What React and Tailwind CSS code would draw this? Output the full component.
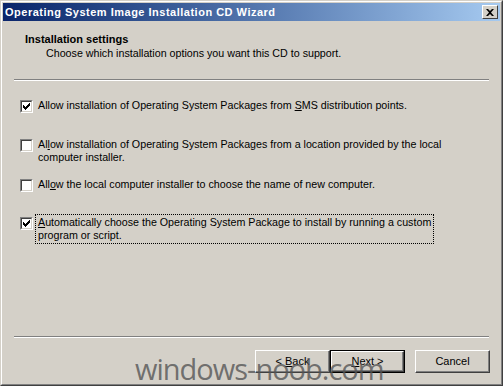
import React from "react"

const font = { fontFamily: "Tahoma, 'Liberation Sans', Arial, sans-serif" }

const Checkbox = ({ checked }) => (
  <div className="w-[13px] h-[13px] shrink-0 border border-t-[#808080] border-l-[#808080] border-r-white border-b-white">
    <div className="w-full h-full bg-white border border-t-[#404040] border-l-[#404040] border-r-[#d4d0c8] border-b-[#d4d0c8] flex items-center justify-center">
      {checked && (
        <svg width="7" height="7" viewBox="0 0 7 7">
          <path d="M0 2h1v1h1v1h1v-1h1v-1h1v-1h1v-1h1v3h-1v1h-1v1h-1v1h-1v1h-1v-1h-1v-1h-1z" fill="#000" />
        </svg>
      )}
    </div>
  </div>
)

const Option = ({ checked, focused, children }) => (
  <div className="flex items-start">
    <div className="pt-[1px]">
      <Checkbox checked={checked} />
    </div>
    <div
      className={`ml-[4px] px-[1px] text-[10.7px] leading-[13px] text-black ${
        focused ? "outline outline-1 outline-dotted outline-black outline-offset-[1px]" : ""
      }`}
    >
      {children}
    </div>
  </div>
)

const Button = ({ children, isDefault }) => (
  <div className={`w-[75px] h-[23px] ${isDefault ? "border border-black" : ""}`}>
    <div className="w-full h-full bg-[#d4d0c8] border border-t-white border-l-white border-r-[#404040] border-b-[#404040] shadow-[inset_-1px_-1px_0_#808080] flex items-center justify-center text-[11px] text-black">
      {children}
    </div>
  </div>
)

export default function App() {
  return (
    <div
      className="relative w-[503px] h-[386px] overflow-hidden bg-[#d4d0c8] border border-t-[#d4d0c8] border-l-[#d4d0c8] border-r-[#404040] border-b-[#404040]"
      style={font}
    >
      <div className="h-full flex flex-col border border-t-white border-l-white border-r-[#808080] border-b-[#808080] p-[1px]">
        {/* title bar */}
        <div className="h-[18px] flex items-center justify-between pl-[2px] pr-[2px] bg-gradient-to-r from-[#0a246a] to-[#a6caf0]">
          <span className="text-white font-bold text-[11px] tracking-[0.5px]">
            Operating System Image Installation CD Wizard
          </span>
          <div className="w-[16px] h-[14px] bg-[#d4d0c8] border border-t-white border-l-white border-r-[#404040] border-b-[#404040] flex items-center justify-center">
            <svg width="8" height="7" viewBox="0 0 8 7">
              <path d="M0 0h2l2 2 2-2h2l-3 3.5 3 3.5h-2l-2-2-2 2h-2l3-3.5z" fill="#000" />
            </svg>
          </div>
        </div>

        {/* header */}
        <div className="pl-[22px] pt-[12px]">
          <div className="text-[11px] leading-[13px] font-bold text-black">Installation settings</div>
          <div className="pl-[21px] pt-[1px] text-[10.7px] leading-[13px] text-black">
            Choose which installation options you want this CD to support.
          </div>
        </div>
        <div className="mx-[11px] mt-[19px] h-[2px] border-t border-t-[#808080] border-b border-b-white" />

        {/* options */}
        <div className="pl-[17px] pt-[18px] flex flex-col">
          <Option checked>
            Allow installation of Operating System Packages from <u>S</u>MS distribution points.
          </Option>
          <div className="h-[25px]" />
          <Option>
            Al<u>l</u>ow installation of Operating System Packages from a location provided by the local
            <br />
            computer installer.
          </Option>
          <div className="h-[14px]" />
          <Option>
            All<u>o</u>w the local computer installer to choose the name of new computer.
          </Option>
          <div className="h-[24px]" />
          <Option checked focused>
            <u>A</u>utomatically choose the Operating System Package to install by running a custom
            <br />
            program or script.
          </Option>
        </div>

        <div className="flex-1" />
        <div className="mx-[11px] h-[2px] border-t border-t-[#808080] border-b border-b-white" />

        {/* buttons */}
        <div className="flex justify-end pr-[10px] pt-[12px] pb-[10px]">
          <Button>
            &lt;&nbsp;<u>B</u>ack
          </Button>
          <Button isDefault>
            <u>N</u>ext&nbsp;&gt;
          </Button>
          <div className="w-[10px]" />
          <Button>Cancel</Button>
        </div>
      </div>

      {/* watermark */}
      <div
        className="absolute left-[134px] top-[350px] text-[29px] leading-[36px] tracking-[-1px] text-[#555555]/80 pointer-events-none"
        style={{ fontFamily: "'Open Sans', 'DejaVu Sans', sans-serif" }}
      >
        windows-noob.com
      </div>
    </div>
  )
}
